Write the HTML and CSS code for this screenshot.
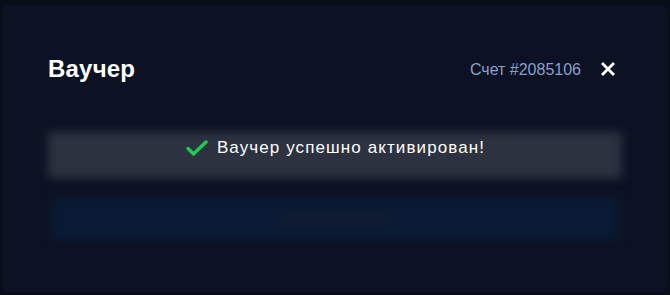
FILE: index.html
```html
<!DOCTYPE html>
<html lang="ru">
<head>
<meta charset="utf-8">
<link rel="stylesheet" href="styles.css">
</head>
<body>
<div class="backdrop">
  <div class="modal">
    <div class="header">
      <h1 class="title">Ваучер</h1>
      <div class="header-right">
        <span class="account">Счет #2085106</span>
        <svg class="close" width="14" height="14" viewBox="0 0 14 14"><path d="M2 2 L12 12 M12 2 L2 12" stroke="#fff" stroke-width="2.8" stroke-linecap="square"/></svg>
      </div>
    </div>
    <div class="success">
      <svg class="check" width="22" height="16" viewBox="0 0 22 16"><path d="M2 8.5 L7.5 14 L20 2" fill="none" stroke="#1fcb54" stroke-width="3.4" stroke-linecap="round" stroke-linejoin="round"/></svg>
      <span class="success-text">Ваучер успешно активирован!</span>
    </div>
    <div class="button-ghost"><span class="ghost-label"></span></div>
  </div>
</div>
</body>
</html>
```

FILE: styles.css
```css
* { box-sizing: border-box; }
html, body {
  margin: 0;
  padding: 0;
  background: #080d18;
  font-family: "Liberation Sans", Arial, sans-serif;
  width: 670px;
  height: 295px;
  overflow: hidden;
}
.backdrop {
  padding: 5px 2px 0 2px;
  height: 295px;
}
.modal {
  background: #0c1223;
  height: 287px;
  border-radius: 8px;
  padding: 0 46px 0 46px;
  display: flex;
  flex-direction: column;
}
.header {
  display: flex;
  justify-content: space-between;
  align-items: center;
  margin-top: 50px;
  height: 28px;
}
.title {
  margin: 0;
  font-size: 24px;
  font-weight: 700;
  color: #fff;
  letter-spacing: 0.2px;
}
.header-right {
  display: flex;
  align-items: center;
  gap: 20px;
  padding-right: 7px;
}
.account {
  color: #8b9fc8;
  font-size: 16px;
  margin-top: 2px;
}
.close { display: block; margin-top: -1px; }
.success {
  position: relative;
  margin-top: 49px;
  height: 46px;
  display: flex;
  align-items: center;
  justify-content: center;
  gap: 9px;
  padding-bottom: 14px;
}
.success::before {
  content: "";
  position: absolute;
  inset: 0;
  background: #2c323f;
  filter: blur(5px);
  z-index: 0;
}
.check, .success-text { position: relative; z-index: 1; }
.check { margin-left: 1px; }
.success-text {
  color: #fff;
  font-size: 17px;
  letter-spacing: 1.1px;
}
.button-ghost {
  position: relative;
  margin: 20px 4px 0 4px;
  height: 42px;
  background: #0a1a34;
  filter: blur(5px);
  display: flex;
  align-items: center;
  justify-content: center;
}
.ghost-label {
  width: 110px;
  height: 14px;
  background: #101b30;
}
```
